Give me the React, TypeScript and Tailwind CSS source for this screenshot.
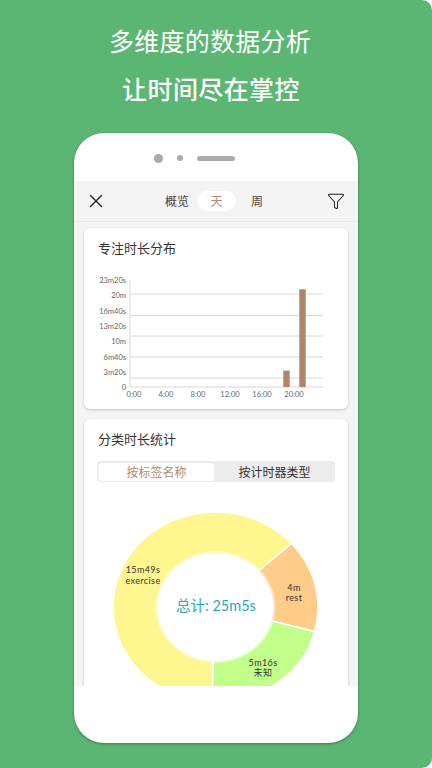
import { X, Filter } from 'lucide-react'

const cjk = "font-['Noto_Sans_CJK_SC','Noto_Sans',sans-serif]"

const yLabels = [
  { text: '23m20s', y: 280 },
  { text: '20m', y: 295 },
  { text: '16m40s', y: 311 },
  { text: '13m20s', y: 326 },
  { text: '10m', y: 341 },
  { text: '6m40s', y: 357 },
  { text: '3m20s', y: 372 },
  { text: '0', y: 387 },
]
const gridLines = [294, 315.5, 336, 357, 378, 387]
const xLabels = [
  { text: '0:00', x: 134 },
  { text: '4:00', x: 166 },
  { text: '8:00', x: 198 },
  { text: '12:00', x: 230 },
  { text: '16:00', x: 262 },
  { text: '20:00', x: 294 },
]

function BarChart() {
  // viewBox uses the screenshot's coordinates, so values can be read off directly
  return (
    <svg viewBox="84 270 263 135" className="block w-[263px] h-[135px]">
      <line x1="130" y1="280" x2="130" y2="387" stroke="#d8d8d8" strokeWidth="1" />
      {gridLines.map((y) => (
        <line key={y} x1="130" y1={y} x2="323" y2={y} stroke="#d8d8d8" strokeWidth="1" />
      ))}
      {yLabels.map((l) => (
        <text key={l.text} x="126" y={l.y + 2.5} textAnchor="end" fontSize="7.5" fill="#666" fontFamily="Lato, sans-serif">
          {l.text}
        </text>
      ))}
      {xLabels.map((l) => (
        <text key={l.text} x={l.x} y="397" textAnchor="middle" fontSize="7.5" fill="#666" fontFamily="Lato, sans-serif">
          {l.text}
        </text>
      ))}
      <rect x="283.3" y="370.7" width="6.4" height="16.3" fill="#b08468" />
      <rect x="299.3" y="289.3" width="6.4" height="97.7" fill="#b08468" />
    </svg>
  )
}

const cx = 215.5
const cy = 607
const rx = 102.5
const ry = 95

// pie wedge on the squashed ellipse, angles in degrees clockwise from 3 o'clock
function slice(from: number, to: number) {
  const point = (deg: number) => {
    const t = (deg * Math.PI) / 180
    return `${cx + rx * Math.cos(t)} ${cy + ry * Math.sin(t)}`
  }
  const large = to - from > 180 ? 1 : 0
  return `M${cx} ${cy} L${point(from)} A${rx} ${ry} 0 ${large} 1 ${point(to)} Z`
}

function DonutChart() {
  return (
    <svg viewBox="84 489 263 197" className="block w-[263px] h-[197px]">
      <path d={slice(92, 318)} fill="#fff68f" stroke="#fff" strokeWidth="1.5" />
      <path d={slice(-42, 15)} fill="#ffcc8a" stroke="#fff" strokeWidth="1.5" />
      <path d={slice(15, 92)} fill="#c2ff8a" stroke="#fff" strokeWidth="1.5" />
      <ellipse cx={cx} cy={cy} rx="60" ry="56" fill="#fff" fillOpacity="0.45" />
      <ellipse cx={cx} cy={cy} rx="58" ry="54" fill="#fff" />
      <g fontFamily="Lato, 'Noto Sans CJK SC', sans-serif" fontSize="9" letterSpacing="0.4" fill="#333" textAnchor="middle">
        <text x="143" y="573">15m49s</text>
        <text x="143" y="584">exercise</text>
        <text x="294" y="590.5">4m</text>
        <text x="294" y="600.5">rest</text>
        <text x="263" y="665.5">5m16s</text>
        <text x="263" y="675.5">未知</text>
      </g>
      <text x="216" y="611" textAnchor="middle" fontSize="14.5" fill="#2ba6bd" fontFamily="Lato, 'Noto Sans CJK SC', sans-serif">
        总计: 25m5s
      </text>
    </svg>
  )
}

function Card({ className = '', children }: { className?: string; children: React.ReactNode }) {
  return <div className={`bg-white rounded-md shadow-[0_1px_3px_rgba(0,0,0,0.2)] ${className}`}>{children}</div>
}

export default function App() {
  return (
    <div className="w-[432px] h-[768px] bg-white">
      <div className={`w-full h-full overflow-hidden bg-[#5cb673] rounded-r-[10px] flex flex-col items-center ${cjk}`}>
        <h1 className="mt-[23px] mr-[12px] h-[34px] leading-[34px] text-[25px] font-normal text-white tracking-[0.25px]">多维度的数据分析</h1>
        <h2 className="mt-[14px] mr-[10px] h-[34px] leading-[34px] text-[25px] font-medium text-white tracking-[0.4px]">让时间尽在掌控</h2>

        <div className="mt-[28px] w-[284px] h-[610px] bg-white rounded-[30px] shadow-[0_1px_3px_rgba(0,0,0,0.35)] flex flex-col overflow-hidden shrink-0">
          <div className="h-[48px] shrink-0 flex items-center pt-[2px] pl-[80px]">
            <span className="w-[9px] h-[9px] rounded-full bg-[#aaaaaa]" />
            <span className="ml-[14px] w-[6px] h-[6px] rounded-full bg-[#aaaaaa]" />
            <span className="ml-[14px] w-[38px] h-[5px] rounded-full bg-[#aaaaaa]" />
          </div>

          <div className="h-[505px] shrink-0 bg-[#f4f4f4] flex flex-col">
            <div className="h-[41px] shrink-0 flex items-center border-b border-[#e8e8e8] text-[12px] text-[#444]">
              <X className="ml-[11px] w-[22px] h-[22px] text-[#222]" strokeWidth={1.5} />
              <span className="ml-[58px]">概览</span>
              <span className="ml-[8px] w-[39px] h-[20px] rounded-full bg-white text-[#b08a72] flex items-center justify-center">天</span>
              <span className="ml-[15px]">周</span>
              <Filter className="ml-auto mr-[13px] w-[18px] h-[18px] text-[#222]" strokeWidth={1.4} />
            </div>

            <div className="flex-1 min-h-0 overflow-hidden px-[10px] pt-[6px] flex flex-col gap-[10px]">
              <Card className="h-[181px] shrink-0">
                <div className="h-[40px] mb-[2px] pl-[14px] flex items-center text-[13px] text-[#333]">专注时长分布</div>
                <BarChart />
              </Card>

              <Card className="flex-1 min-h-0 overflow-hidden rounded-b-none">
                <div className="h-[40px] mb-[2px] pl-[14px] flex items-center text-[13px] text-[#333]">分类时长统计</div>
                <div className="ml-[13px] mr-[13px] h-[21px] rounded-[4px] bg-[#ececec] flex text-[12px] p-[1.5px]">
                  <div className="w-[115px] pl-[1px] rounded-[3px] bg-white text-[#b08a72] flex items-center justify-center">按标签名称</div>
                  <div className="flex-1 pl-[2px] text-[#333] flex items-center justify-center">按计时器类型</div>
                </div>
                <div className="pt-[7px]">
                  <DonutChart />
                </div>
              </Card>
            </div>
          </div>
        </div>
      </div>
    </div>
  )
}
